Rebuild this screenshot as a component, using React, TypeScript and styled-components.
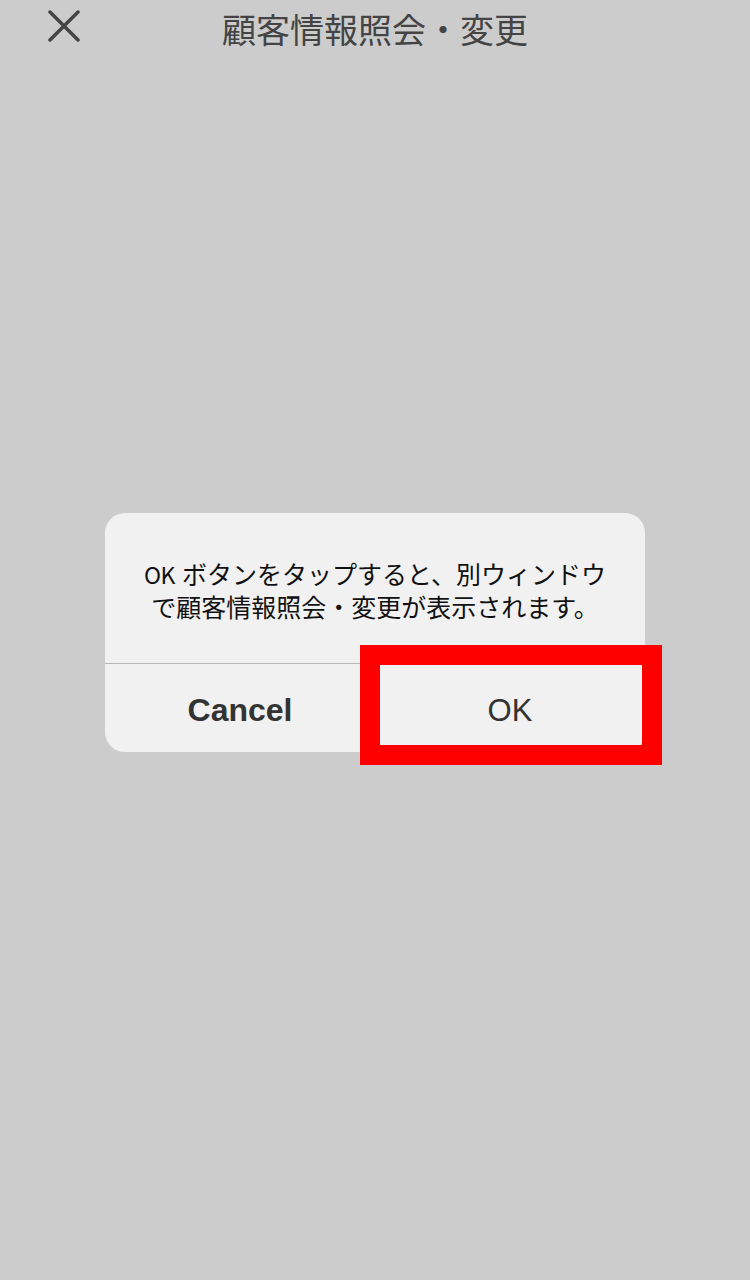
import styled, { createGlobalStyle } from 'styled-components'

const GlobalStyle = createGlobalStyle`
  html, body {
    margin: 0;
    padding: 0;
    background: #cccccc;
  }
  body {
    font-family: "Noto Sans CJK JP", "Noto Sans", sans-serif;
  }
`

const Page = styled.div`
  width: 750px;
  height: 1280px;
  background: #cccccc;
  display: flex;
  flex-direction: column;
  align-items: center;
  overflow: hidden;
`

const Header = styled.header`
  width: 100%;
  height: 60px;
  display: grid;
  grid-template-columns: 150px 1fr 150px;
  align-items: center;
`

const CloseButton = styled.button`
  background: transparent;
  border: none;
  padding: 0;
  margin: 10px 0 0 48px;
  width: 32px;
  height: 32px;
  align-self: start;
  cursor: pointer;
`

const Title = styled.h1`
  margin: -2px 0 0;
  text-align: center;
  font-size: 34px;
  font-weight: 400;
  color: #444444;
  line-height: 60px;
`

const Dialog = styled.div`
  position: relative;
  margin-top: 453px;
  width: 540px;
  background: #f1f1f1;
  border-radius: 20px;
`

const Message = styled.p`
  margin: 0;
  height: 151px;
  box-sizing: border-box;
  padding-top: 44px;
  text-align: center;
  font-size: 25px;
  line-height: 32px;
  color: #111111;
  border-bottom: 1px solid #b8b8b8;
`

const Latin = styled.span`
  display: inline-block;
  font-size: 23px;
  letter-spacing: -0.5px;
  margin-right: 7px;
`

const Actions = styled.div`
  display: grid;
  grid-template-columns: 1fr 1fr;
  height: 88px;
`

const ActionButton = styled.button<{ $bold?: boolean }>`
  background: transparent;
  border: none;
  font-family: "Liberation Sans", Arial, sans-serif;
  font-size: ${p => (p.$bold ? 32 : 31)}px;
  font-weight: ${p => (p.$bold ? 700 : 400)};
  color: #333333;
  padding: 5px 0 0;
  cursor: pointer;
`

const Highlight = styled.div`
  position: absolute;
  left: 255px;
  top: 132px;
  width: 302px;
  height: 120px;
  box-sizing: border-box;
  border: 20px solid #ff0000;
  pointer-events: none;
`

function CloseIcon() {
  return (
    <svg width="32" height="32" viewBox="0 0 32 32">
      <path d="M2 2 L30 30 M30 2 L2 30" stroke="#444444" strokeWidth="3.5" strokeLinecap="round" fill="none" />
    </svg>
  )
}

function App() {
  return (
    <Page>
      <GlobalStyle />
      <Header>
        <CloseButton aria-label="close">
          <CloseIcon />
        </CloseButton>
        <Title>顧客情報照会・変更</Title>
        <div />
      </Header>
      <Dialog>
        <Message>
          <Latin>OK</Latin>ボタンをタップすると、別ウィンドウ
          <br />
          で顧客情報照会・変更が表示されます。
        </Message>
        <Actions>
          <ActionButton $bold>Cancel</ActionButton>
          <ActionButton>OK</ActionButton>
        </Actions>
        <Highlight />
      </Dialog>
    </Page>
  )
}

export default App
